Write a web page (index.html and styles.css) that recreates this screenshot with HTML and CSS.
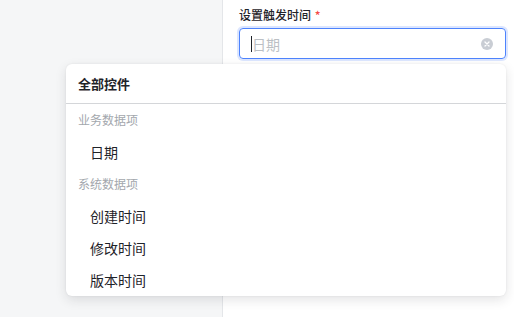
FILE: index.html
```html
<!DOCTYPE html>
<html lang="zh-CN">
<head>
    <meta charset="UTF-8">
    <meta name="viewport" content="width=device-width, initial-scale=1.0">
    <title>设置触发时间</title>
    <link rel="stylesheet" href="styles.css">
</head>
<body>

    <div class="layout">
        <aside class="sidebar"></aside>

        <main class="main">
            <div class="field-label">设置触发时间 <span class="required">*</span></div>
            <div class="select-box">
                <span class="caret"></span>
                <span class="placeholder">日期</span>
                <svg class="clear-icon" width="12" height="12" viewBox="0 0 12 12">
                    <circle cx="6" cy="6" r="6" fill="#c9cdd4"/>
                    <path d="M4 4 L8 8 M8 4 L4 8" stroke="#fff" stroke-width="1.3" stroke-linecap="round"/>
                </svg>
            </div>
        </main>
    </div>

    <!-- dropdown panel for the select above -->
    <div class="dropdown">
        <div class="dropdown-header">全部控件</div>
        <div class="dropdown-body">
            <div class="group-title">业务数据项</div>
            <div class="option">日期</div>
            <div class="group-title">系统数据项</div>
            <div class="option">创建时间</div>
            <div class="option">修改时间</div>
            <div class="option">版本时间</div>
        </div>
    </div>

</body>
</html>
```

FILE: styles.css
```css
* {
    box-sizing: border-box;
}
body {
    margin: 0;
    font-family: "Noto Sans CJK SC", "Noto Sans", sans-serif;
    color: #1f2329;
    background: #fff;
}
.layout {
    display: flex;
    height: 317px;
}
.sidebar {
    flex-shrink: 0;
    width: 223px;
    background-color: #f5f6f7;
    border-right: 1px solid #e4e6e9;
}
.main {
    flex: 1;
    padding: 6px 8px 0 16px;
}
.field-label {
    font-size: 12px;
    font-weight: 500;
    line-height: 18px;
    height: 22px;
    color: #1f2329;
}
.required {
    color: #f54a45;
    margin-left: 1px;
}
.select-box {
    display: flex;
    align-items: center;
    height: 31px;
    width: 267px;
    border: 1px solid #4e83fd;
    border-radius: 4px;
    box-shadow: 0 0 0 2px rgba(78, 131, 253, 0.2);
    padding: 0 11px;
}
.caret {
    width: 1px;
    height: 16px;
    background: #1f2329;
}
.placeholder {
    flex: 1;
    font-size: 14px;
    color: #bbbfc4;
}
.clear-icon {
    display: block;
    margin-right: 1px;
}
.dropdown {
    position: absolute;
    left: 66px;
    top: 64px;
    width: 440px;
    background: #fff;
    border-radius: 6px;
    box-shadow: 0 4px 12px rgba(31, 35, 41, 0.12), 0 0 2px rgba(31, 35, 41, 0.08);
}
.dropdown-header {
    height: 40px;
    line-height: 39px;
    padding-left: 12px;
    font-size: 13px;
    font-weight: 700;
    border-bottom: 1px solid #d4d6d9;
}
.group-title {
    height: 32px;
    line-height: 32px;
    padding-left: 12px;
    font-size: 12px;
    color: #a3a7ad;
}
.option {
    height: 32px;
    line-height: 32px;
    padding-left: 24px;
    font-size: 14px;
    color: #1f2329;
}
```
